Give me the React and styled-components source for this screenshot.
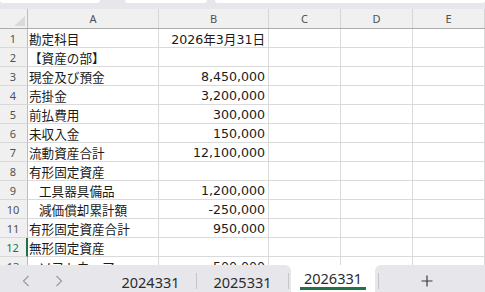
import React from 'react';
import styled, { createGlobalStyle } from 'styled-components';

const GlobalStyle = createGlobalStyle`
    html, body {
        margin: 0;
        padding: 0;
        background: #fff;
    }
    body {
        font-family: "Noto Sans", "Liberation Sans", sans-serif;
    }
`;

const COLS = '28px 131px 110px 72px 72px 72px';
const GREEN = '#217346';

const Window = styled.div`
    width: 485px;
    height: 292px;
    display: flex;
    flex-direction: column;
    overflow: hidden;
    background: #fff;
`;

const Toolbar = styled.div`
    flex: 0 0 9px;
    display: flex;
    align-items: flex-start;
    background: #e7e7eb;
`;

const ToolbarButton = styled.div`
    height: 3px;
    background: #fff;
    border-radius: 0 0 5px 5px;
    margin-left: ${props => props.$gap || 0}px;
    ${props => (props.$w ? `width: ${props.$w}px;` : 'flex: 1;')}
`;

const HeaderRow = styled.div`
    flex: 0 0 20px;
    display: grid;
    grid-template-columns: ${COLS};
    box-sizing: border-box;
    background: #f0f0f0;
    border-bottom: 1px solid #acacac;
`;

const Corner = styled.div`
    position: relative;
    border-right: 1px solid #bdbdbd;

    &::after {
        content: '';
        position: absolute;
        right: 2px;
        bottom: 2px;
        width: 11px;
        height: 10px;
        background: #d9d9d9;
        clip-path: polygon(100% 0, 100% 100%, 0 100%);
    }
`;

const ColHead = styled.div`
    display: flex;
    align-items: center;
    justify-content: center;
    border-right: 1px solid #d6d6d6;
    font-family: "Noto Sans", sans-serif;
    font-size: 11px;
    color: #505050;
`;

const Body = styled.div`
    flex: 1;
    overflow: hidden;
`;

const Row = styled.div`
    display: grid;
    grid-template-columns: ${COLS};
    height: 19px;
`;

const RowHead = styled.div`
    box-sizing: border-box;
    display: flex;
    align-items: center;
    justify-content: center;
    padding-right: 1px;
    background: #f0f0f0;
    border-bottom: 1px solid #d8d8d8;
    border-right: ${props => (props.$active ? `2px solid ${GREEN}` : '1px solid #bdbdbd')};
    font-family: "Noto Sans", sans-serif;
    font-size: 11px;
    color: ${props => (props.$active ? GREEN : '#505050')};
`;

const Cell = styled.div`
    box-sizing: border-box;
    display: flex;
    align-items: center;
    justify-content: ${props => (props.$right ? 'flex-end' : 'flex-start')};
    padding: 0 3px 0 ${props => (props.$indent ? 11 : 1)}px;
    border-right: 1px solid #dadada;
    border-bottom: 1px solid #dadada;
    font-family: "DejaVu Sans", "Noto Sans CJK JP", sans-serif;
    font-size: 12.6px;
    color: #1a1a1a;
    white-space: nowrap;
    overflow: hidden;
`;

const TabBar = styled.div`
    flex: 0 0 27px;
    display: flex;
    background: #fff;
`;

const TabStrip = styled.div`
    display: flex;
    align-items: stretch;
    background: #e7e7eb;
    ${props => (props.$w ? `width: ${props.$w}px;` : 'flex: 1;')}
    border-top-left-radius: ${props => (props.$side === 'right' ? 6 : 0)}px;
    border-top-right-radius: ${props => (props.$side === 'left' ? 6 : 0)}px;
    padding-left: ${props => (props.$side === 'right' ? 3 : 0)}px;
`;

const Nav = styled.div`
    width: 105px;
    display: flex;
    align-items: center;
    gap: 25px;
    padding: 5px 0 0 22px;
    box-sizing: border-box;
`;

const SheetTab = styled.div`
    width: 91px;
    display: flex;
    align-items: center;
    justify-content: center;
    padding-top: 6px;
    box-sizing: border-box;
    font-family: "Noto Sans", sans-serif;
    font-size: 14.5px;
    color: #2b2b2b;
`;

const Divider = styled.div`
    width: 1px;
    height: 16px;
    align-self: center;
    margin-top: 5px;
    background: #c6c6c9;
`;

const ActiveTab = styled.div`
    width: 84px;
    display: flex;
    justify-content: center;
    align-items: flex-start;
    padding-top: 4px;
    box-sizing: border-box;
    background: #fff;
`;

const ActiveLabel = styled.span`
    display: block;
    line-height: 18px;
    padding: 0 3.5px;
    border-bottom: 3px solid ${GREEN};
    font-family: "Noto Sans", sans-serif;
    font-size: 14.5px;
    color: #2b2b2b;
`;

const AddSheet = styled.div`
    width: 95px;
    display: flex;
    align-items: center;
    justify-content: center;
    padding-top: 5px;
    box-sizing: border-box;
`;

const rows = [
    { label: '勘定科目', value: '2026年3月31日' },
    { label: '【資産の部】', value: '' },
    { label: '現金及び預金', value: '8,450,000' },
    { label: '売掛金', value: '3,200,000' },
    { label: '前払費用', value: '300,000' },
    { label: '未収入金', value: '150,000' },
    { label: '流動資産合計', value: '12,100,000' },
    { label: '有形固定資産', value: '' },
    { label: '工具器具備品', value: '1,200,000', indent: true },
    { label: '減価償却累計額', value: '-250,000', indent: true },
    { label: '有形固定資産合計', value: '950,000' },
    { label: '無形固定資産', value: '' },
    { label: 'ソフトウェア', value: '500,000', indent: true },
];

const Chevron = ({ dir }) => (
    <svg width="8" height="12" viewBox="0 0 8 12">
        <polyline
            points={dir === 'left' ? '6.5,1 1.5,6 6.5,11' : '1.5,1 6.5,6 1.5,11'}
            fill="none"
            stroke="#9c9c9c"
            strokeWidth="1.2"
        />
    </svg>
);

const Plus = () => (
    <svg width="12" height="12" viewBox="0 0 12 12">
        <path d="M6 0.5V11.5M0.5 6H11.5" stroke="#3c3c3c" strokeWidth="1.2" />
    </svg>
);

export default function App() {
    return (
        <Window>
            <GlobalStyle />
            <Toolbar>
                <ToolbarButton $w={100} />
                <ToolbarButton $w={82} $gap={25} />
                <ToolbarButton $gap={8} />
            </Toolbar>
            <HeaderRow>
                <Corner />
                {['A', 'B', 'C', 'D', 'E'].map(c => (
                    <ColHead key={c}>{c}</ColHead>
                ))}
            </HeaderRow>
            <Body>
                {rows.map((r, i) => (
                    <Row key={i}>
                        <RowHead $active={i === 11}>{i + 1}</RowHead>
                        <Cell $indent={r.indent}>{r.label}</Cell>
                        <Cell $right>{r.value}</Cell>
                        <Cell />
                        <Cell />
                        <Cell />
                    </Row>
                ))}
            </Body>
            <TabBar>
                <TabStrip $w={291} $side="left">
                    <Nav>
                        <Chevron dir="left" />
                        <Chevron dir="right" />
                    </Nav>
                    <SheetTab>2024331</SheetTab>
                    <Divider />
                    <SheetTab>2025331</SheetTab>
                    <Divider />
                </TabStrip>
                <ActiveTab>
                    <ActiveLabel>2026331</ActiveLabel>
                </ActiveTab>
                <TabStrip $side="right">
                    <Divider />
                    <AddSheet>
                        <Plus />
                    </AddSheet>
                </TabStrip>
            </TabBar>
        </Window>
    );
}
